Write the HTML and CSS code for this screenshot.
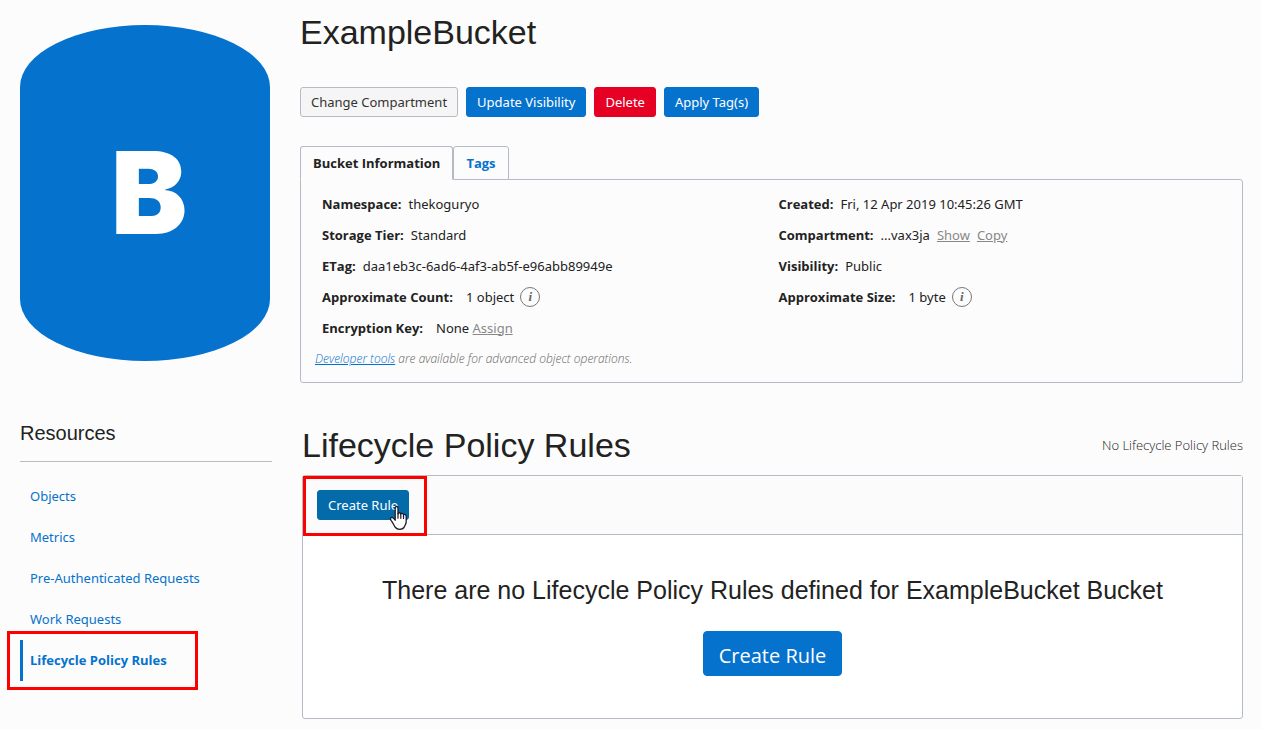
FILE: index.html
```html
<!DOCTYPE html>
<html lang="en">
<head>
<meta charset="utf-8">
<meta name="viewport" content="width=device-width, initial-scale=1">
<title>ExampleBucket</title>
<link rel="stylesheet" href="styles.css">
</head>
<body>
<div class="page">
  <aside class="sidebar">
    <div class="bucket-badge">B</div>
    <h2 class="sidebar-title">Resources</h2>
    <nav aria-label="Resources">
      <ul class="nav">
        <li class="nav-item"><a class="nav-link" href="#objects">Objects</a></li>
        <li class="nav-item"><a class="nav-link" href="#metrics">Metrics</a></li>
        <li class="nav-item"><a class="nav-link" href="#par">Pre-Authenticated Requests</a></li>
        <li class="nav-item"><a class="nav-link" href="#work">Work Requests</a></li>
        <li class="nav-item nav-current"><a class="nav-link" href="#rules" aria-current="page">Lifecycle Policy Rules</a><span class="highlight highlight-nav"></span></li>
      </ul>
    </nav>
  </aside>
  <main class="main">
    <h1 class="title">ExampleBucket</h1>
    <div class="actions">
      <button class="btn btn-plain" type="button">Change Compartment</button>
      <button class="btn" type="button">Update Visibility</button>
      <button class="btn btn-danger" type="button">Delete</button>
      <button class="btn" type="button">Apply Tag(s)</button>
    </div>
    <div class="tabs" role="tablist">
      <button class="tab tab-active" type="button" role="tab" aria-selected="true">Bucket Information</button>
      <button class="tab" type="button" role="tab" aria-selected="false">Tags</button>
    </div>
    <section class="info" role="tabpanel" aria-label="Bucket Information">
      <div class="info-columns">
        <dl class="facts">
          <div class="fact"><dt>Namespace:</dt><dd>thekoguryo</dd></div>
          <div class="fact"><dt>Storage Tier:</dt><dd>Standard</dd></div>
          <div class="fact"><dt>ETag:</dt><dd>daa1eb3c-6ad6-4af3-ab5f-e96abb89949e</dd></div>
          <div class="fact fact-wide"><dt>Approximate Count:</dt><dd>1 object</dd><dd class="hint"><button class="info-btn" type="button" aria-label="About the count">i</button></dd></div>
          <div class="fact fact-wide"><dt>Encryption Key:</dt><dd>None <a class="quiet" href="#assign">Assign</a></dd></div>
        </dl>
        <dl class="facts">
          <div class="fact"><dt>Created:</dt><dd>Fri, 12 Apr 2019 10:45:26 GMT</dd></div>
          <div class="fact"><dt>Compartment:</dt><dd>...vax3ja</dd><dd><a class="quiet" href="#show">Show</a></dd><dd><a class="quiet" href="#copy">Copy</a></dd></div>
          <div class="fact"><dt>Visibility:</dt><dd>Public</dd></div>
          <div class="fact fact-wide"><dt>Approximate Size:</dt><dd>1 byte</dd><dd class="hint"><button class="info-btn" type="button" aria-label="About the size">i</button></dd></div>
        </dl>
      </div>
      <p class="note"><a href="#tools">Developer tools</a> are available for advanced object operations.</p>
    </section>
    <section class="rules">
      <header class="rules-head">
        <h2 class="title">Lifecycle Policy Rules</h2>
        <span class="count">No Lifecycle Policy Rules</span>
      </header>
      <div class="card">
        <div class="toolbar">
          <button class="btn btn-hover" type="button">Create Rule</button>
          <span class="highlight highlight-toolbar"></span>
          <svg class="cursor" width="20" height="26" viewBox="0 0 20 26" aria-hidden="true"><path d="M6.2 15.2V3.2C6.2 .9 9 .9 9 3.2v5.6c.3-1.500 2.700-1.400 2.800.3.500-1.100 2.600-.8 2.700.8.800-.9 2.700-.3 2.700 1.300v5.300c0 2.500-1.200 3.800-1.700 5-.9 2-2.500 2.800-4.800 2.800-2.400 0-3.900-1-4.900-2.600-1-1.700-1.700-3.600-3.400-5.800-1.100-1.500-1.300-2.300-.6-3 .8-.8 2.400-.4 4.400 2.300z" fill="#fff" stroke="#1b1b2b" stroke-width="1.300" stroke-linejoin="round"/><path d="M9 8.500v4.700M11.800 9v4.300M14.500 10v3.500" fill="none" stroke="#1b1b2b" stroke-width="1.200" stroke-linecap="round"/></svg>
        </div>
        <div class="empty">
          <p class="empty-text">There are no Lifecycle Policy Rules defined for ExampleBucket Bucket</p>
          <button class="btn btn-large" type="button">Create Rule</button>
        </div>
      </div>
    </section>
  </main>
</div>
</body>
</html>
```
FILE: styles.css
```css
* { box-sizing: border-box; }

body {
  margin: 0;
  background: #fcfcfc;
  color: #222;
  font: 13px/20px "Noto Sans", "Open Sans", sans-serif;
}

h1, h2, p, ul, dl, dd { margin: 0; padding: 0; }
h1, h2 { font-family: "Liberation Sans", Arial, sans-serif; font-weight: 400; }
a { color: #0572ce; }
button { font: inherit; cursor: pointer; }

.page {
  display: grid;
  grid-template-columns: 252px minmax(0, 1fr);
  gap: 28px;
  padding: 0 18px 10px 20px;
}

/* Sidebar */
.bucket-badge {
  display: flex;
  align-items: center;
  justify-content: center;
  width: 250px;
  height: 336px;
  margin-top: 25px;
  padding-left: 8px;
  border-radius: 50% / 62px;
  background: #0572ce;
  color: #fff;
  font-family: Inter, "Open Sans", sans-serif;
  font-size: 114px;
  line-height: 160px;
  font-weight: 900;
}
.sidebar-title {
  margin-top: 59px;
  padding-bottom: 14px;
  border-bottom: 1px solid #b8bcc4;
  font-size: 20px;
  line-height: 27px;
}
.nav { margin-top: 14px; list-style: none; }
.nav-item { position: relative; }
.nav-link {
  display: block;
  padding: 10px;
  line-height: 21px;
  text-decoration: none;
}
.nav-current .nav-link {
  padding-left: 7px;
  border-left: 3px solid #0572ce;
  font-family: "Open Sans", sans-serif;
  font-weight: 700;
}

/* Callout frames */
.highlight {
  position: absolute;
  border: 3px solid #f00;
  pointer-events: none;
}
.highlight-nav { top: -9px; left: -13px; width: 191px; height: 59px; }
.highlight-toolbar { top: 0; left: 0; width: 124px; height: 60px; }

/* Bucket header */
.title { font-size: 34px; line-height: 40px; }
.main > .title { margin-top: 12px; }
.actions { display: flex; flex-wrap: wrap; gap: 8px; margin-top: 35px; }
.btn {
  padding: 4px 10px;
  border: 1px solid #0572ce;
  border-radius: 3px;
  background: #0572ce;
  color: #fff;
}
.btn-plain { border-color: #b4bbc5; background: #f5f5f5; color: #333; }
.btn-danger { border-color: #e60023; background: #e60023; }
.btn-hover { border-color: #046bab; background: #046bab; }
.btn-large { padding: 9px 15px 5px; border-radius: 4px; font-family: "Open Sans", sans-serif; font-size: 20px; line-height: 29px; }

/* Tabs */
.tabs { position: relative; display: flex; margin-top: 29px; }
.tab {
  padding: 6px 12px;
  border: 1px solid #b4bbc5;
  border-radius: 3px 3px 0 0;
  background: #fcfcfc;
  color: #0572ce;
  font-family: "Open Sans", sans-serif;
  font-weight: 700;
}
.tab-active { border-bottom-color: #fcfcfc; color: #222; }
.info {
  margin-top: -1px;
  padding: 8px 14px 13px;
  border: 1px solid #b4bbc5;
  border-radius: 0 3px 3px 3px;
}
.info-columns { display: grid; grid-template-columns: 1fr 1fr; padding-left: 7px; margin-right: -7px; }
.fact { display: flex; align-items: center; gap: 7px; height: 31px; }
.fact-wide { gap: 13px; }
.fact-wide .hint { display: flex; margin-left: -7px; }
dt { font-family: "Open Sans", sans-serif; font-weight: 700; }
.quiet { color: #888; }
.info-btn {
  width: 20px;
  height: 20px;
  padding: 0;
  border: 1px solid #777;
  border-radius: 50%;
  background: none;
  color: #666;
  font: italic 700 13px/16px "Liberation Serif", serif;
}
.note { margin-top: 6px; color: #666; font-family: "Open Sans", sans-serif; font-size: 12px; font-weight: 300; font-style: italic; }

/* Rules */
.rules { margin-top: 42px; padding-left: 2px; }
.rules-head { display: flex; align-items: center; justify-content: space-between; gap: 20px; }
.count { font-family: "Open Sans", sans-serif; font-weight: 300; }
.card { margin-top: 10px; border: 1px solid #b4bbc5; border-radius: 3px; background: #fff; }
.toolbar {
  position: relative;
  padding: 14px;
  border-bottom: 1px solid #b4bbc5;
  background: #fbfbfb;
}
.cursor { position: absolute; top: 29px; left: 86px; }
.empty {
  display: flex;
  flex-direction: column;
  align-items: center;
  gap: 26px;
  padding: 40px 20px 42px;
}
.empty-text { font: 25px/30px "Liberation Sans", Arial, sans-serif; text-align: center; }
```
